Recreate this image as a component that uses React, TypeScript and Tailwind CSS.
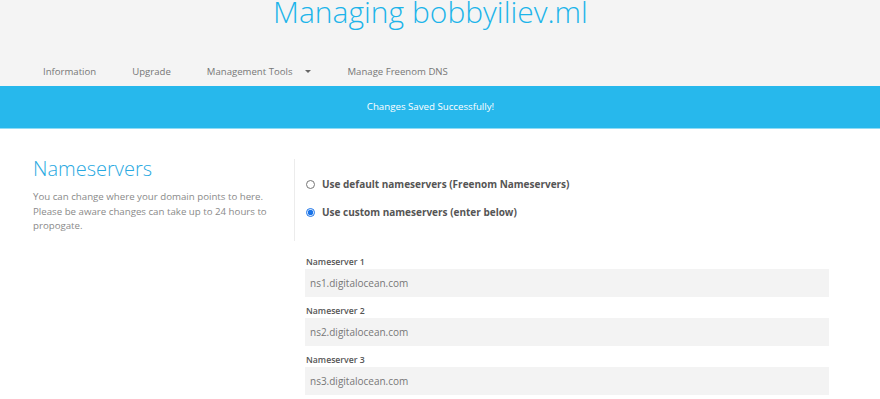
const font = { fontFamily: '"Open Sans", "Noto Sans", sans-serif' };

const navItems = ['Information', 'Upgrade', 'Management Tools', 'Manage Freenom DNS'];
const servers = ['ns1.digitalocean.com', 'ns2.digitalocean.com', 'ns3.digitalocean.com'];

export default function App() {
  return (
    <div className="w-[880px] h-[399px] overflow-hidden bg-white" style={font}>
      <div className="bg-[#f4f4f4] pt-[1px]">
        <h1 className="text-center text-[30px] leading-[30px] font-light text-[#1db4ea] -mt-[4px] pr-[19px]">
          Managing bobbyiliev.ml
        </h1>
        <nav className="flex items-center gap-[36px] h-[59px] pl-[43px] pt-[31px] text-[9.6px] text-[#777]">
          {navItems.map((item) =>
            item === 'Management Tools' ? (
              <span key={item} className="flex items-center">
                {item}
                <span className="ml-[13px] w-0 h-0 border-l-[3px] border-r-[3px] border-t-[3.5px] border-l-transparent border-r-transparent border-t-[#666]" />
              </span>
            ) : (
              <span key={item}>{item}</span>
            )
          )}
        </nav>
      </div>
      <div className="h-[43px] bg-[#27b8ec] border-b border-[#8fdcf6] flex items-center justify-center pr-[19px] text-[9.7px] text-white">
        Changes Saved Successfully!
      </div>

      <div className="flex pt-[28px]">
        <div className="w-[294px] pl-[33px] pr-[20px]">
          <h2 className="text-[20px] leading-[24px] font-light text-[#29a9e1]">Nameservers</h2>
          <p className="mt-[9px] text-[9.7px] leading-[14.5px] text-[#8a8a8a]">
            You can change where your domain points to here. Please be aware changes can take up to 24 hours to propogate.
          </p>
        </div>
        <div className="flex-1">
          <div className="border-l border-[#ececec] h-[82px] mt-[2px] pl-[11px] pt-[18px] text-[10px] font-bold text-[#555]">
            <label className="flex items-center gap-[7px] h-[14px]">
              <input type="radio" name="ns" className="w-[9px] h-[9px] m-0 accent-[#1a73e8]" />
              Use default nameservers (Freenom Nameservers)
            </label>
            <label className="flex items-center gap-[7px] h-[14px] mt-[14px]">
              <input type="radio" name="ns" defaultChecked className="w-[9px] h-[9px] m-0 accent-[#1a73e8]" />
              Use custom nameservers (enter below)
            </label>
          </div>
          <div className="pl-[11px] pt-[15px] w-[535px] flex flex-col gap-[8px]">
            {servers.map((s, i) => (
              <div key={s}>
                <div className="text-[8.7px] leading-[13px] font-semibold text-[#555] pl-[1px]">Nameserver {i + 1}</div>
                <div className="h-[28px] bg-[#f3f3f3] flex items-center px-[5px] text-[10px] text-[#777]">{s}</div>
              </div>
            ))}
          </div>
        </div>
      </div>
    </div>
  );
}
